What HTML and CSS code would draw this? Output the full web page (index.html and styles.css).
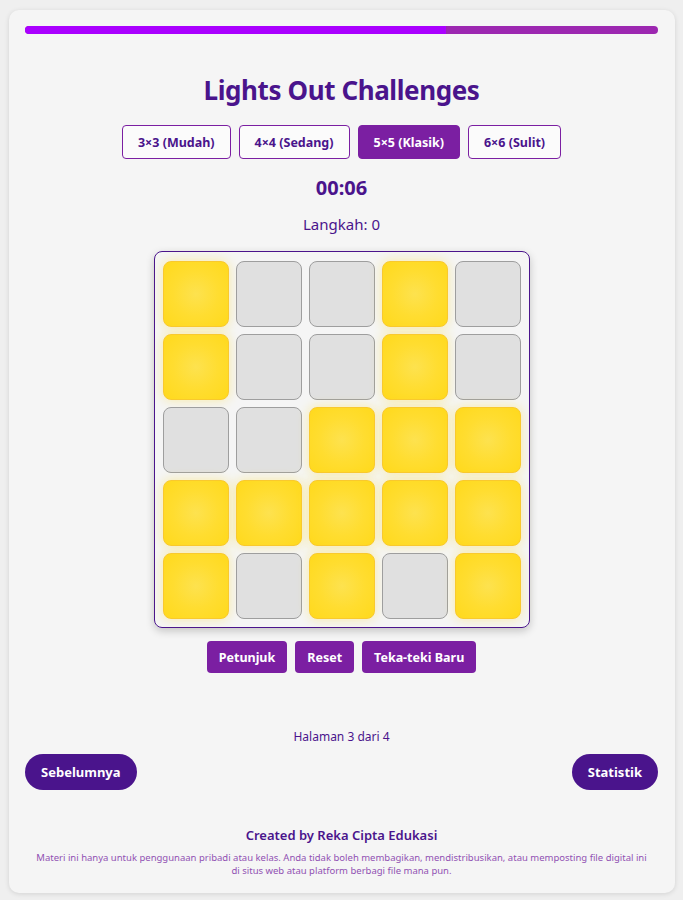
FILE: index.html
```html
<!DOCTYPE html>
<html lang="id">
<head>
    <meta charset="UTF-8">
    <meta name="viewport" content="width=device-width, initial-scale=1.0">
    <title>Lights Out Challenges</title>
    <link rel="stylesheet" href="styles.css">
</head>
<body>
    <div class="container">
        <div class="progress">
            <div class="progress-fill"></div>
        </div>

        <h1>Lights Out Challenges</h1>

        <div class="levels">
            <button class="level">3×3 (Mudah)</button>
            <button class="level">4×4 (Sedang)</button>
            <button class="level active">5×5 (Klasik)</button>
            <button class="level">6×6 (Sulit)</button>
        </div>

        <div class="timer">00:06</div>
        <div class="moves">Langkah: <span id="moveCount">0</span></div>

        <div class="board" id="board"></div>

        <div class="actions">
            <button class="action">Petunjuk</button>
            <button class="action">Reset</button>
            <button class="action">Teka-teki Baru</button>
        </div>

        <p class="page-info">Halaman 3 dari 4</p>

        <div class="nav">
            <button class="nav-button">Sebelumnya</button>
            <button class="nav-button">Statistik</button>
        </div>

        <div class="footer">
            <p class="credit">Created by Reka Cipta Edukasi</p>
            <p class="disclaimer">Materi ini hanya untuk penggunaan pribadi atau kelas. Anda tidak boleh membagikan, mendistribusikan, atau memposting file digital ini di situs web atau platform berbagi file mana pun.</p>
        </div>
    </div>

    <script>
        // Current puzzle state (1 = lit)
        const grid = [
            [1, 0, 0, 1, 0],
            [1, 0, 0, 1, 0],
            [0, 0, 1, 1, 1],
            [1, 1, 1, 1, 1],
            [1, 0, 1, 0, 1]
        ];

        const board = document.getElementById('board');
        grid.forEach(function(row) {
            row.forEach(function(cell) {
                const div = document.createElement('div');
                div.className = cell ? 'cell on' : 'cell';
                board.appendChild(div);
            });
        });
    </script>
</body>
</html>
```

FILE: styles.css
```css
body {
    font-family: "Noto Sans", "Open Sans", sans-serif;
    margin: 0;
    padding: 10px 8px 7px 9px;
    background-color: #efefef;
    color: #4a148c;
}
.container {
    background-color: #f5f5f5;
    border-radius: 10px;
    box-shadow: 0 1px 5px rgba(0, 0, 0, 0.12);
    padding: 16px 17px 16px 16px;
    text-align: center;
}
.progress {
    height: 8px;
    border-radius: 4px;
    background-color: #9c27b0;
    overflow: hidden;
}
.progress-fill {
    width: 66.5%;
    height: 100%;
    background-color: #aa00ff;
}
h1 {
    margin: 39px 0 0;
    font-size: 26px;
    line-height: 34px;
    font-weight: 700;
    letter-spacing: -0.4px;
    color: #4a148c;
}
.levels {
    display: flex;
    justify-content: center;
    gap: 8px;
    margin-top: 18px;
}
.level {
    height: 34px;
    padding: 0 15px;
    font-family: inherit;
    font-size: 12.5px;
    font-weight: 700;
    color: #4a148c;
    background-color: #fbfbfb;
    border: 1px solid #7b1fa2;
    border-radius: 4px;
    cursor: pointer;
}
.level.active {
    background-color: #7b1fa2;
    color: #fff;
}
.timer {
    margin-top: 16px;
    font-size: 20px;
    line-height: 26px;
    font-weight: 700;
}
.moves {
    margin-top: 13px;
    font-size: 15px;
    line-height: 20px;
}
.board {
    display: grid;
    grid-template-columns: repeat(5, 66px);
    gap: 7px;
    width: max-content;
    margin: 17px auto 0;
    padding: 9px 8px 8px;
    border: 1px solid #4a148c;
    border-radius: 8px;
    box-shadow: 0 3px 8px rgba(0, 0, 0, 0.2);
}
.cell {
    height: 66px;
    box-sizing: border-box;
    background-color: #e0e0e0;
    border: 1px solid #9e9e9e;
    border-radius: 8px;
}
.cell.on {
    background: radial-gradient(circle at center, #fde24f 0%, #ffdd30 50%, #ffd91c 100%);
    border-color: #f9c92e;
    box-shadow: 0 0 12px rgba(255, 220, 40, 0.4);
}
.actions {
    display: flex;
    justify-content: center;
    gap: 8px;
    margin-top: 13px;
}
.action {
    height: 32px;
    padding: 0 12px;
    font-family: inherit;
    font-size: 12.5px;
    font-weight: 700;
    color: #fff;
    background-color: #7b1fa2;
    border: none;
    border-radius: 4px;
    cursor: pointer;
}
.page-info {
    margin: 56px 0 0;
    font-size: 12px;
    line-height: 16px;
}
.nav {
    display: flex;
    justify-content: space-between;
    margin-top: 9px;
}
.nav-button {
    height: 36px;
    padding: 0 16px;
    font-family: inherit;
    font-size: 13px;
    font-weight: 700;
    color: #fff;
    background-color: #4a148c;
    border: none;
    border-radius: 18px;
    cursor: pointer;
}
.footer {
    margin-top: 36px;
}
.credit {
    margin: 0;
    font-size: 13px;
    line-height: 18px;
    font-weight: 600;
}
.disclaimer {
    margin: 7px 0 0;
    padding: 0 8px;
    font-size: 9.5px;
    line-height: 13px;
    color: #9151b3;
}
```
